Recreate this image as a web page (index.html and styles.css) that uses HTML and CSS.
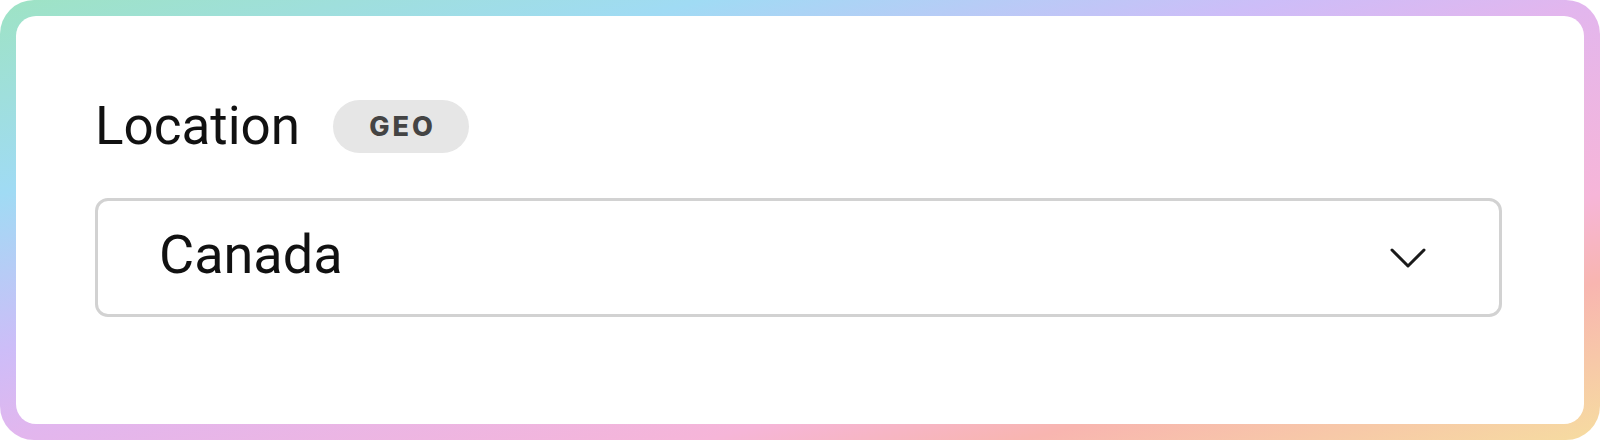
FILE: index.html
```html
<!DOCTYPE html>
<html lang="en">
<head>
  <meta charset="UTF-8" />
  <title>Location</title>
  <meta name="viewport" content="width=device-width, initial-scale=1.0" />
  <link rel="stylesheet" href="styles.css">
</head>
<body>
  <div class="frame">
    <div class="card">
      <div class="field-head">
        <span class="field-label">Location</span>
        <span class="tag">GEO</span>
      </div>
      <div class="select">
        <span class="select-value">Canada</span>
        <svg class="chevron" width="36" height="22" viewBox="0 0 36 22" fill="none">
          <path d="M2 3 L18 19 L34 3" stroke="#1a1a1a" stroke-width="3" stroke-linecap="round" stroke-linejoin="round"/>
        </svg>
      </div>
    </div>
  </div>
</body>
</html>
```

FILE: styles.css
```css
html, body {
  margin: 0;
  padding: 0;
  height: 100%;
  background-color: #fff;
  font-family: 'Roboto', 'Liberation Sans', sans-serif;
  color: #111;
}

.frame {
  height: 440px;
  box-sizing: border-box;
  padding: 16px;
  border-radius: 34px;
  background: linear-gradient(to bottom right,
    #9ee3c4 0%,
    #a0dbf4 22%,
    #cdbdf8 40%,
    #e2b6ee 50%,
    #f6b5d8 72%,
    #f8b5b0 82%,
    #f6dca0 100%);
}

.card {
  height: 100%;
  box-sizing: border-box;
  background-color: #fff;
  border-radius: 20px;
  padding: 84px 82px 0 79px;
}

.field-head {
  display: flex;
  align-items: center;
  gap: 33px;
  height: 53px;
}

.field-label {
  font-size: 53px;
  line-height: 1;
  color: #111;
}

.tag {
  display: inline-flex;
  align-items: center;
  justify-content: center;
  width: 136px;
  height: 53px;
  border-radius: 27px;
  background-color: #e6e6e6;
  color: #444;
  font-family: 'Inter', 'Liberation Sans', sans-serif;
  font-weight: 800;
  font-size: 27px;
  letter-spacing: 3px;
  padding-left: 3px;
  box-sizing: border-box;
}

.select {
  margin-top: 45px;
  height: 119px;
  box-sizing: border-box;
  border: 3px solid #d2d2d2;
  border-radius: 13px;
  display: flex;
  align-items: center;
  justify-content: space-between;
  padding: 0 73px 0 61px;
}

.select-value {
  font-size: 54px;
  line-height: 1;
  color: #111;
  padding-bottom: 6px;
}

.chevron {
  display: block;
}
```
